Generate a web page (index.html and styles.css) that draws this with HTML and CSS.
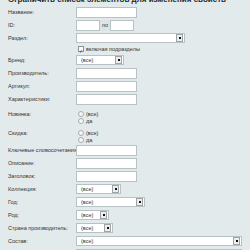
FILE: index.html
```html
<!DOCTYPE html>
<html lang="ru">
<head>
    <meta charset="UTF-8">
    <title>Ограничить список элементов</title>
    <link rel="stylesheet" href="styles.css">
</head>
<body>

<h1 class="title">Ограничить список элементов для изменения свойств</h1>

<div class="filter">
    <div class="row"><label>Название:</label><span class="txt"></span></div>
    <div class="row"><label>ID:</label>
        <div class="range"><span class="txt short"></span><span class="to">по</span><span class="txt short"></span></div>
    </div>
    <div class="row"><label>Раздел:</label><span class="sel w-section"><span></span><i class="btn"></i></span></div>
    <div class="row check-row"><label></label><span class="check"><i class="box">✓</i>включая подразделы</span></div>
    <div class="row"><label>Бренд:</label><span class="sel w-brand"><span>(все)</span><i class="btn"></i></span></div>
    <div class="row"><label>Производитель:</label><span class="txt"></span></div>
    <div class="row"><label>Артикул:</label><span class="txt"></span></div>
    <div class="row"><label>Характеристики:</label><span class="txt"></span></div>
    <div class="row radio-row"><label>Новинка:</label>
        <div class="radios"><span class="radio"><i></i>(все)</span><span class="radio"><i></i>да</span></div>
    </div>
    <div class="row radio-row"><label>Скидка:</label>
        <div class="radios"><span class="radio"><i></i>(все)</span><span class="radio"><i></i>да</span></div>
    </div>
    <div class="row"><label>Ключевые словосочетания:</label><span class="txt"></span></div>
    <div class="row"><label>Описание:</label><span class="txt"></span></div>
    <div class="row"><label>Заголовок:</label><span class="txt"></span></div>
    <div class="row"><label>Коллекция:</label><span class="sel w-coll"><span>(все)</span><i class="btn"></i></span></div>
    <div class="row"><label>Год:</label><span class="sel w-year"><span>(все)</span><i class="btn"></i></span></div>
    <div class="row"><label>Род:</label><span class="sel w-kind"><span>(все)</span><i class="btn"></i></span></div>
    <div class="row"><label>Страна производитель:</label><span class="sel w-country"><span>(все)</span><i class="btn"></i></span></div>
    <div class="row"><label>Состав:</label><span class="sel w-comp"><span>(все)</span><i class="btn"></i></span></div>
    <div class="row"><label>Тип товара:</label><span class="sel w-comp"><span>(все)</span><i class="btn"></i></span></div>
</div>

</body>
</html>
```

FILE: styles.css
```css
body {
    margin: 0;
    padding: 0 0 0 8px;
    background-color: #e3eaeb;
    font-family: 'Liberation Sans', Arial, sans-serif;
    color: #333;
    overflow: hidden;
}
.title {
    margin: -5px 0 3px 0;
    font-size: 8px;
    font-weight: 700;
    color: #1f2a2e;
    white-space: nowrap;
}
.filter {
    display: flex;
    flex-direction: column;
    gap: 2px;
}
.row {
    display: grid;
    grid-template-columns: 68px auto;
    align-items: start;
    font-size: 5.5px;
    line-height: 11px;
}
.row label {
    white-space: nowrap;
}
.txt {
    display: block;
    width: 59px;
    height: 9px;
    background: #fff;
    border: 1px solid #b8c1c4;
}
.txt.short {
    width: 22px;
}
.range {
    display: flex;
}
.to {
    width: 10px;
    height: 11px;
    text-align: center;
    background: #dde4e5;
}
.sel {
    display: flex;
    align-items: center;
    justify-content: space-between;
    height: 10px;
    padding-left: 4px;
    background: #fff;
    border: 1px solid #b8c1c4;
    font-size: 5.5px;
    box-sizing: border-box;
}
.sel .btn {
    display: grid;
    place-items: center;
    width: 5px;
    height: 6px;
    margin-right: 1px;
    background: #eceeee;
    border: 1px solid #9ea4a6;
}
.sel .btn::after {
    content: "";
    width: 2px;
    height: 2px;
    background: #111;
}
.w-section { width: 109px; }
.w-brand { width: 48px; }
.w-coll { width: 45px; }
.w-year { width: 69px; }
.w-kind { width: 33px; }
.w-country { width: 37px; }
.w-comp { width: 166px; }
.check-row {
    line-height: 8px;
    margin-top: -1px;
}
.check {
    display: flex;
    align-items: center;
    gap: 2px;
    padding-left: 2px;
    font-size: 5.5px;
}
.check .box {
    display: grid;
    place-items: center;
    width: 4px;
    height: 4px;
    border: 1px solid #8c9396;
    background: #fff;
    font-style: normal;
    font-size: 5px;
    color: #223;
}
.radio-row {
    margin-top: 3px;
    line-height: 8px;
}
.radios {
    display: flex;
    flex-direction: column;
}
.radio {
    display: flex;
    align-items: center;
    gap: 2px;
    padding-left: 2px;
    height: 7px;
    font-size: 5.5px;
}
.radio i {
    width: 4px;
    height: 4px;
    border: 1px solid #a6adb0;
    border-radius: 50%;
    background: #f6f7f7;
}
```
